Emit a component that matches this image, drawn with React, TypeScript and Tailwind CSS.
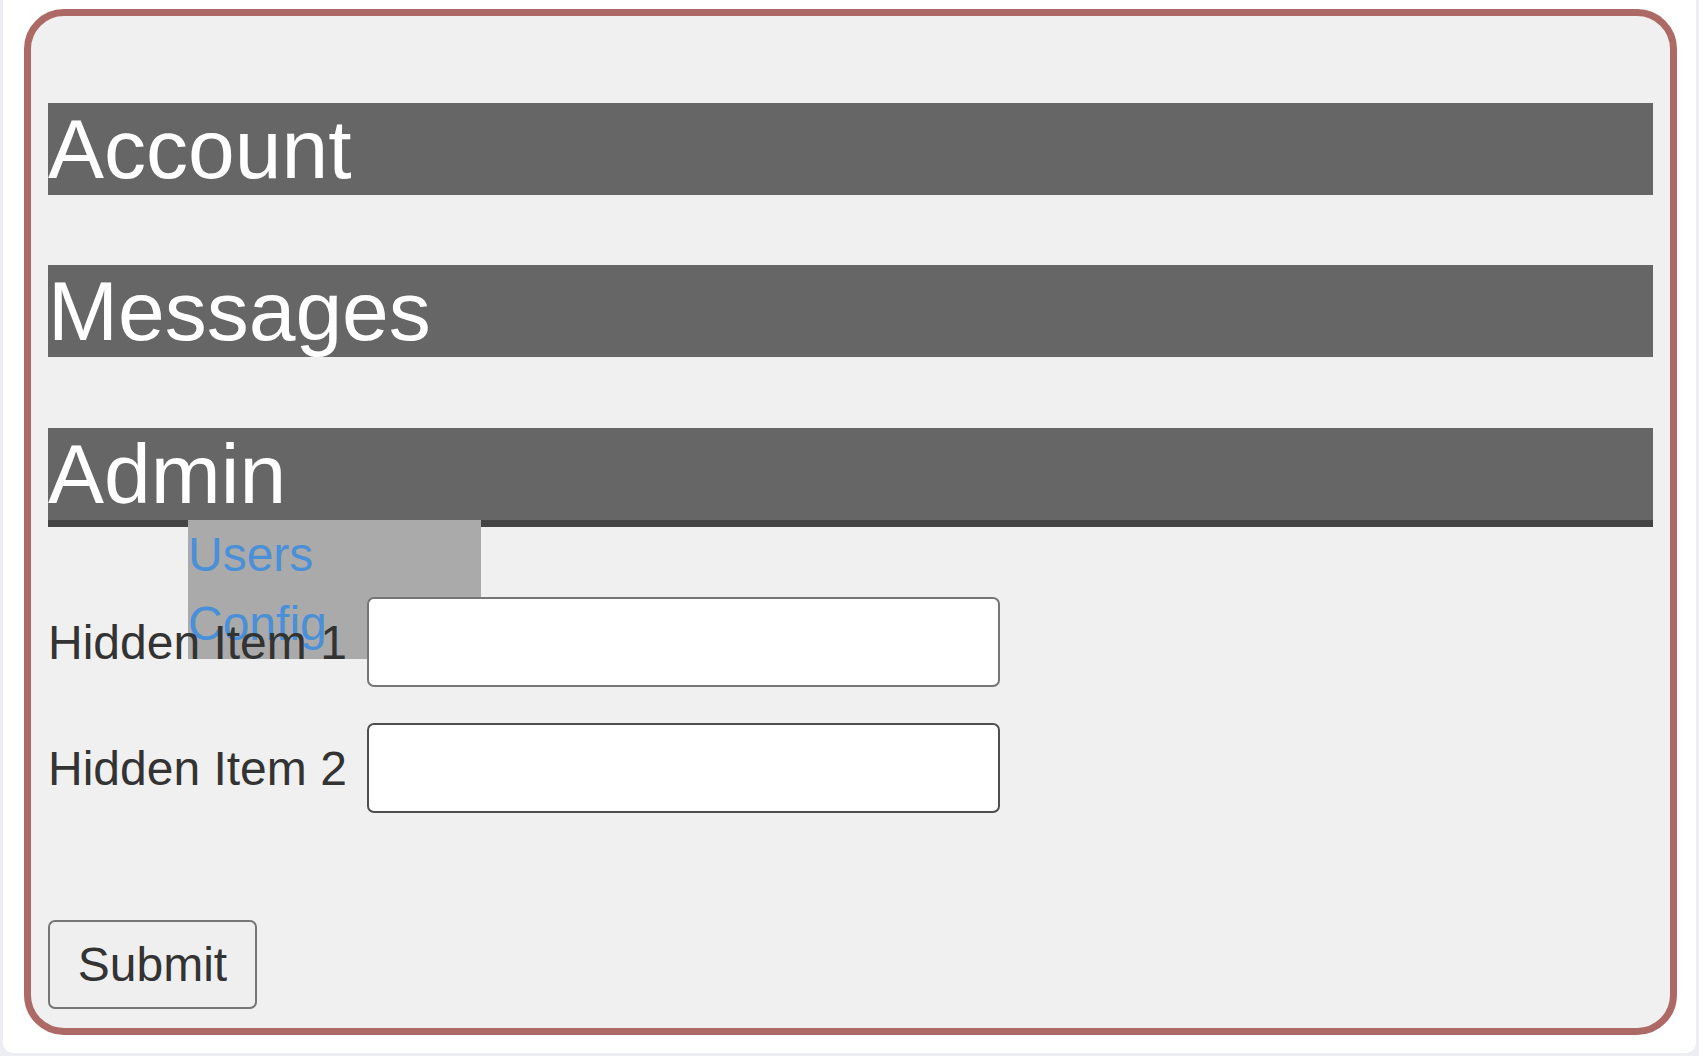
import { useState } from 'react'

const NAV_ITEMS = ['Account', 'Messages', 'Admin'] as const

const ADMIN_LINKS = ['Users', 'Config']

function NavBar({ label, open }: { label: string; open: boolean }) {
  return (
    <div
      className={`relative h-[92px] bg-[#666666] text-white text-[84px] leading-[92px] box-content ${
        open ? 'border-b-[7px] border-[#444444]' : ''
      }`}
    >
      {label}
      {open && (
        <div className="absolute left-[140px] top-[92px] w-[293px] h-[139px] bg-[#aaaaaa] flex flex-col">
          {ADMIN_LINKS.map(link => (
            <a key={link} href="#" className="block py-[7px] text-[48px] leading-[55px] text-[#4a90d9]">
              {link}
            </a>
          ))}
        </div>
      )}
    </div>
  )
}

function Field({ label, dark }: { label: string; dark?: boolean }) {
  return (
    <label className="relative z-10 flex items-center h-[90px] text-[48px] leading-[55px] text-[#333333]">
      <span className="w-[319px] shrink-0">{label}</span>
      <input
        type="text"
        className={`w-[633px] h-[90px] bg-white rounded-[7px] border-[2.5px] outline-none ${
          dark ? 'border-[#4f4f4f]' : 'border-[#767676]'
        }`}
      />
    </label>
  )
}

export default function App() {
  const [openMenu] = useState<string>('Admin')

  return (
    <div className="h-[1056px] w-full bg-[#eceef4] px-[3px] pb-[3px] font-['Liberation_Sans',Arial,sans-serif]">
      <div className="h-full bg-white rounded-b-[10px] pt-[9px] pl-[21px] pr-[19px] pb-[18px] flex">
        <div className="flex-1 flex flex-col bg-[#f0f0f0] border-[7px] border-[#ad6966] rounded-[40px] px-[17px] pt-[87px]">
          <nav className="flex flex-col">
            <NavBar label={NAV_ITEMS[0]} open={openMenu === 'Account'} />
            <div className="h-[70px]" />
            <NavBar label={NAV_ITEMS[1]} open={openMenu === 'Messages'} />
            <div className="h-[71px]" />
            <NavBar label={NAV_ITEMS[2]} open={openMenu === 'Admin'} />
          </nav>

          <form className="flex flex-col mt-[70px]" onSubmit={e => e.preventDefault()}>
            <Field label="Hidden Item 1" />
            <div className="h-[36px]" />
            <Field label="Hidden Item 2" dark />
            <button
              type="submit"
              className="mt-[107px] w-[209px] h-[89px] bg-[#efefef] border-2 border-[#767676] rounded-[7px] text-[48px] leading-[55px] text-[#333333]"
            >
              Submit
            </button>
          </form>
        </div>
      </div>
    </div>
  )
}
